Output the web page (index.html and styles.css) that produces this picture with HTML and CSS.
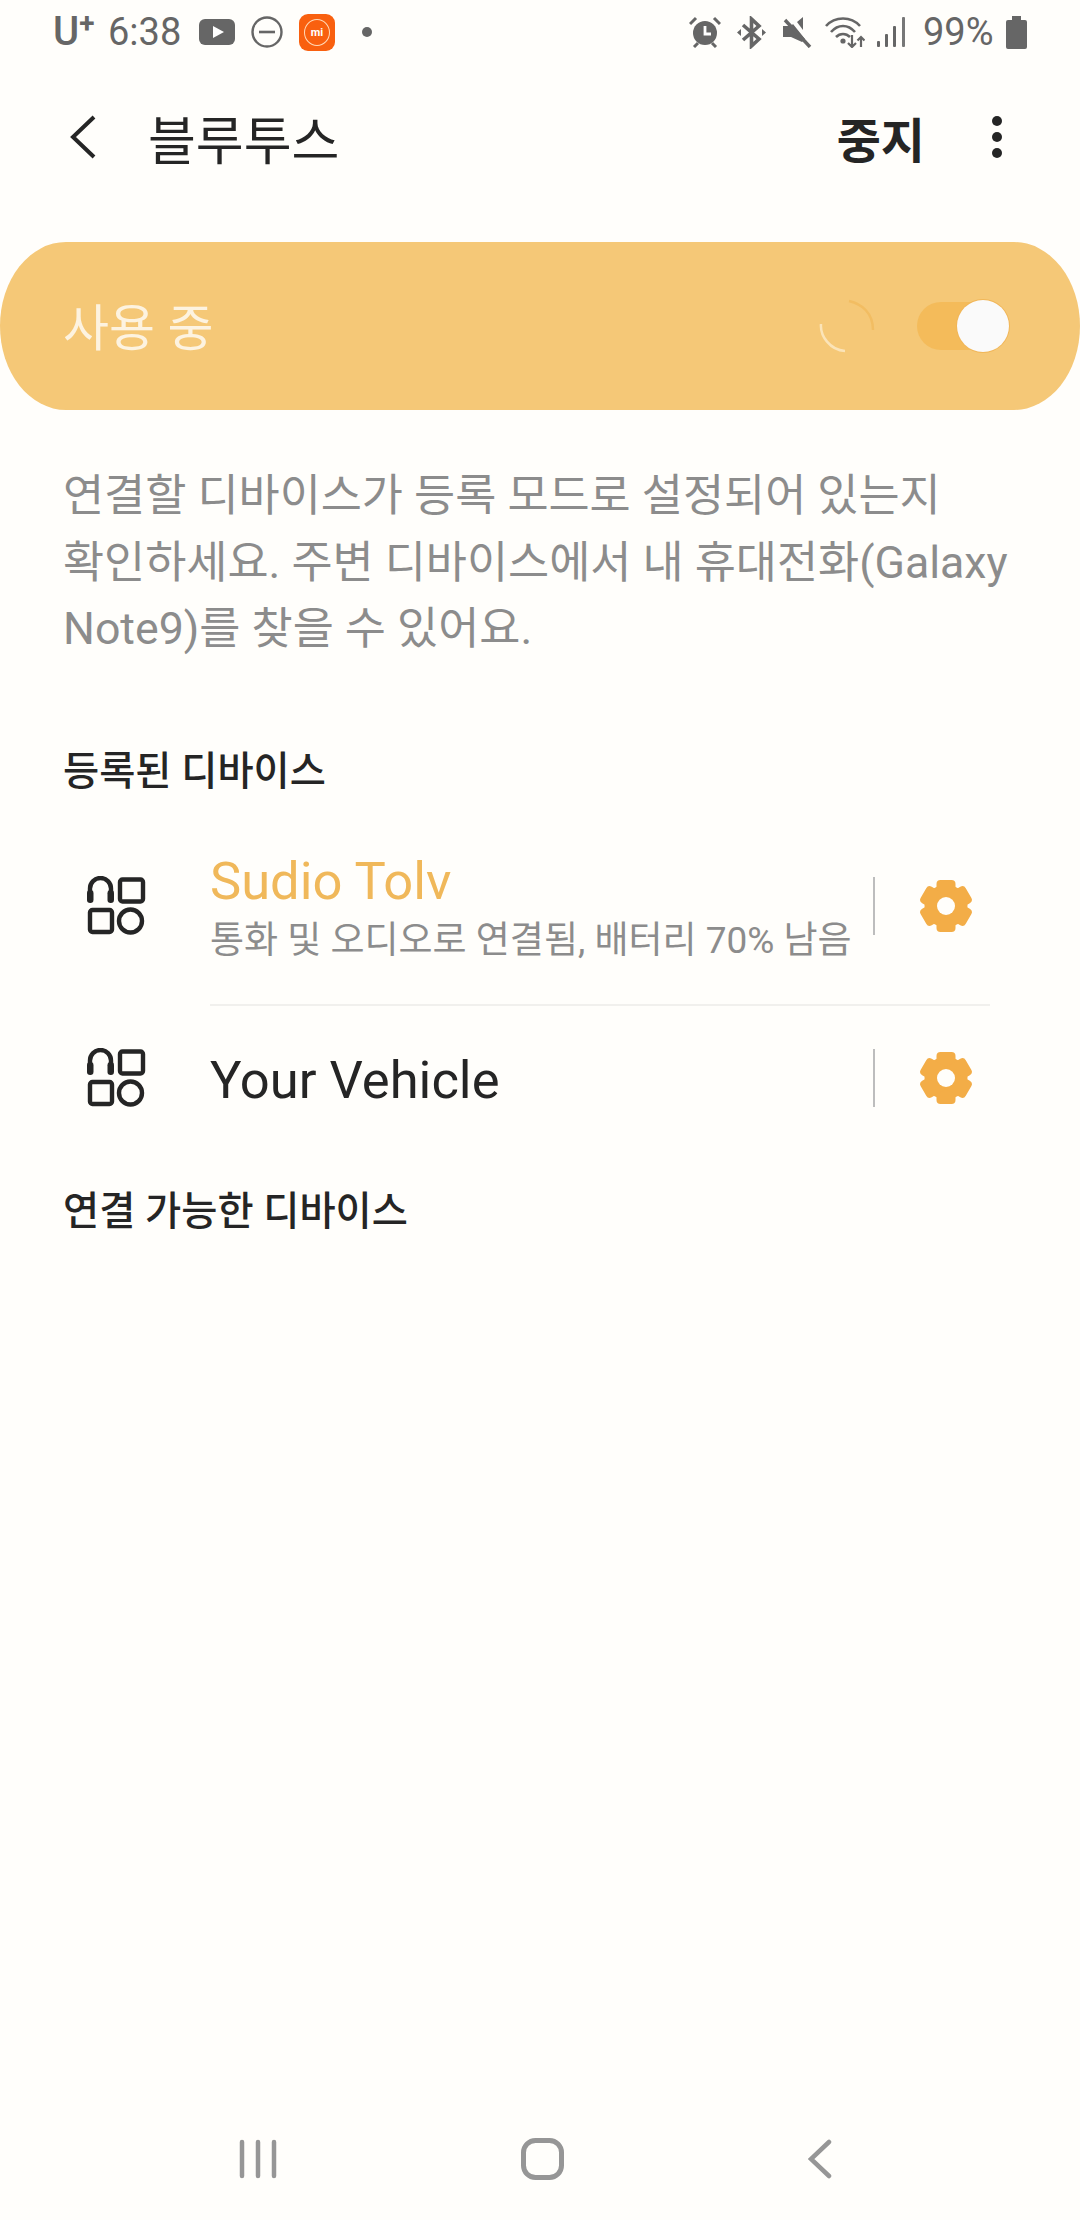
FILE: index.html
```html
<!DOCTYPE html>
<html lang="ko">
<head>
    <meta charset="UTF-8">
    <meta name="viewport" content="width=device-width, initial-scale=1.0">
    <title>블루투스</title>
    <link rel="stylesheet" href="styles.css">
</head>
<body>
<div class="page">
    <div class="status-bar">
        <div class="status-left">
            <span class="carrier">U<sup>+</sup></span>
            <span class="time">6:38</span>
            <svg class="ic-yt" viewBox="0 0 36 26"><rect width="36" height="26" rx="6" fill="#666"/><path d="M14 7 25 13 14 19z" fill="#fff"/></svg>
            <svg class="ic-dnd" viewBox="0 0 32 32"><circle cx="16" cy="16" r="14.5" fill="none" stroke="#666" stroke-width="2.4"/><path d="M8 16h16" stroke="#666" stroke-width="2.6"/></svg>
            <div class="mi-app"><span class="mi-ring"></span><span class="mi-text">mi</span></div>
            <span class="dot"></span>
        </div>
        <div class="status-right">
            <svg class="ic-alarm" viewBox="0 0 32 32"><circle cx="16" cy="17" r="12" fill="#666"/><path d="M16 10v8h6" fill="none" stroke="#fff" stroke-width="2.8"/><path d="M1 8 7 2M31 8 25 2M5 31l4-4M27 31l-4-4" stroke="#666" stroke-width="3"/></svg>
            <svg class="ic-bt" viewBox="0 0 29 33"><path d="M6 9 22 23 14.500 30V3L22 10 6 24" fill="none" stroke="#666" stroke-width="3.600"/><path d="M0 16.500 4 13V20zM29 16.500 25 13V20z" fill="#666"/></svg>
            <svg class="ic-mute" viewBox="0 0 29 32"><path d="M0 10h8L10 8 22 23 19 26 8 21H0zM14 6 20 1V14z" fill="#666"/><path d="M2 4 27 31" stroke="#666" stroke-width="3.400"/></svg>
            <svg class="ic-wifi" viewBox="0 0 40 32"><g fill="none" stroke="#666" stroke-width="2.600"><path d="M1 10C10 0 26 0 35 10"/><path d="M6 16C13 8 23 8 30 16"/><path d="M11 21C15 17 21 17 25 21"/></g><circle cx="18" cy="25" r="2.600" fill="#666"/><path d="M27 19V31M23 27l4 4 4-4M36 31V21M32.500 24.500 36 21l3.500 3.500" fill="none" stroke="#666" stroke-width="2.200"/></svg>
            <svg class="ic-signal" viewBox="0 0 28 30"><g fill="#666"><rect x="0" y="24" width="3" height="6" rx="1"/><rect x="8" y="17" width="3" height="13" rx="1"/><rect x="16" y="9" width="3" height="21" rx="1"/></g><rect x="25" y="0" width="3" height="30" rx="1" fill="#777"/></svg>
            <span class="battery-text">99%</span>
            <svg class="ic-battery" viewBox="0 0 21 33"><path d="M6 0h9v4h4a2 2 0 0 1 2 2v25a2 2 0 0 1-2 2H2a2 2 0 0 1-2-2V6a2 2 0 0 1 2-2h4z" fill="#666"/></svg>
        </div>
    </div>

    <div class="header">
        <svg class="ic-back" viewBox="0 0 26 44"><path d="M24 2 3 22 24 42" fill="none" stroke="#252525" stroke-width="4"/></svg>
        <span class="title">블루투스</span>
        <span class="stop">중지</span>
        <svg class="ic-more" viewBox="0 0 12 44"><circle cx="6" cy="6" r="5" fill="#252525"/><circle cx="6" cy="22" r="5" fill="#252525"/><circle cx="6" cy="38" r="5" fill="#252525"/></svg>
    </div>

    <div class="banner">
        <span class="banner-text">사용 중</span>
        <svg class="spinner" viewBox="0 0 56 56"><path d="M2 26C1 38 11 52 26 53" fill="none" stroke="#fbe4b8" stroke-width="2.500"/><path d="M30 3C43 6 54 15 54 32" fill="none" stroke="#f2bd62" stroke-width="2.500"/></svg>
        <div class="switch"><span class="knob"></span></div>
    </div>

    <p class="desc">연결할 디바이스가 등록 모드로 설정되어 있는지<br>확인하세요. 주변 디바이스에서 내 휴대전화(Galaxy<br>Note9)를 찾을 수 있어요.</p>

    <div class="section first">등록된 디바이스</div>

    <div class="device one">
        <svg class="ic-device" viewBox="0 0 60 60"><g fill="none" stroke="#252525" stroke-width="4.400"><path d="M4 18V12.500a10.500 10.500 0 0 1 21 0V18"/><rect x="34" y="3.500" width="23" height="22" rx="2.500"/><rect x="4" y="34" width="22" height="22" rx="2.500"/><circle cx="44.500" cy="45" r="11.500"/></g><rect x="1" y="14" width="6.500" height="13" rx="3.200" fill="#252525"/><rect x="21.500" y="14" width="6.500" height="13" rx="3.200" fill="#252525"/></svg>
        <div class="device-info">
            <div class="device-name active">Sudio Tolv</div>
            <div class="device-sub">통화 및 오디오로 연결됨, 배터리 70% 남음</div>
        </div>
        <span class="vline"></span>
        <svg class="ic-gear" viewBox="0 0 52 52"><g fill="#f3ad47"><circle cx="26" cy="26" r="21.500"/><rect x="16.500" y="0" width="19" height="52" rx="4"/><rect x="16.500" y="0" width="19" height="52" rx="4" transform="rotate(60 26 26)"/><rect x="16.500" y="0" width="19" height="52" rx="4" transform="rotate(120 26 26)"/></g><circle cx="26" cy="26" r="9" fill="#fffefb"/></svg>
    </div>
    <div class="row-line"></div>
    <div class="device two">
        <svg class="ic-device" viewBox="0 0 60 60"><g fill="none" stroke="#252525" stroke-width="4.400"><path d="M4 18V12.500a10.500 10.500 0 0 1 21 0V18"/><rect x="34" y="3.500" width="23" height="22" rx="2.500"/><rect x="4" y="34" width="22" height="22" rx="2.500"/><circle cx="44.500" cy="45" r="11.500"/></g><rect x="1" y="14" width="6.500" height="13" rx="3.200" fill="#252525"/><rect x="21.500" y="14" width="6.500" height="13" rx="3.200" fill="#252525"/></svg>
        <div class="device-info">
            <div class="device-name">Your Vehicle</div>
        </div>
        <span class="vline"></span>
        <svg class="ic-gear" viewBox="0 0 52 52"><g fill="#f3ad47"><circle cx="26" cy="26" r="21.500"/><rect x="16.500" y="0" width="19" height="52" rx="4"/><rect x="16.500" y="0" width="19" height="52" rx="4" transform="rotate(60 26 26)"/><rect x="16.500" y="0" width="19" height="52" rx="4" transform="rotate(120 26 26)"/></g><circle cx="26" cy="26" r="9" fill="#fffefb"/></svg>
    </div>

    <div class="section second">연결 가능한 디바이스</div>

    <div class="nav-bar">
        <svg class="ic-recents" viewBox="0 0 38 40"><path d="M3 3V37M19 3V37M35 3V37" stroke="#969696" stroke-width="4.500" stroke-linecap="round"/></svg>
        <svg class="ic-home" viewBox="0 0 43 42"><rect x="2.500" y="2.500" width="38" height="37" rx="12" fill="none" stroke="#969696" stroke-width="5"/></svg>
        <svg class="ic-navback" viewBox="0 0 24 40"><path d="M21 3 3 20 21 37" fill="none" stroke="#969696" stroke-width="4.500" stroke-linecap="round"/></svg>
    </div>
</div>
</body>
</html>
```
FILE: styles.css
```css
* {
    box-sizing: border-box;
}

body {
    margin: 0;
    background-color: #fffefb;
    font-family: Roboto, "Noto Sans CJK KR", sans-serif;
}

svg {
    display: block;
    flex-shrink: 0;
}

.page {
    display: flex;
    flex-direction: column;
    width: 1080px;
    height: 2220px;
    overflow: hidden;
}

/* status bar */
.status-bar {
    display: flex;
    justify-content: space-between;
    align-items: center;
    height: 64px;
    padding: 0 53px;
    color: #666;
    font-size: 38px;
}

.status-left,
.status-right {
    display: flex;
    align-items: center;
}

.carrier {
    width: 55px;
    font-weight: 500;
    font-size: 40px;
    line-height: 40px;
}

.carrier sup {
    font-size: 28px;
    font-weight: 700;
    line-height: 0;
    vertical-align: 12px;
}

.time {
    width: 91px;
}

.ic-yt {
    width: 36px;
    height: 26px;
    margin-right: 16px;
}

.ic-dnd {
    width: 32px;
    height: 32px;
    margin-right: 16px;
}

.mi-app {
    position: relative;
    display: flex;
    align-items: center;
    justify-content: center;
    width: 36px;
    height: 37px;
    margin-right: 27px;
    border-radius: 9px;
    background-color: #f9600f;
}

.mi-ring {
    position: absolute;
    top: 5px;
    left: 5px;
    width: 26px;
    height: 27px;
    border: 1px solid #ffd9b8;
    border-radius: 50%;
}

.mi-text {
    color: #fff;
    font-size: 11px;
    font-weight: 700;
    line-height: 11px;
}

.dot {
    width: 10px;
    height: 10px;
    border-radius: 50%;
    background-color: #666;
}

.ic-alarm {
    width: 32px;
    height: 32px;
    margin-right: 16px;
}

.ic-bt {
    width: 29px;
    height: 33px;
    margin-right: 17px;
}

.ic-mute {
    width: 29px;
    height: 32px;
    margin-right: 13px;
}

.ic-wifi {
    width: 40px;
    height: 32px;
    margin-right: 12px;
}

.ic-signal {
    width: 28px;
    height: 30px;
    margin-right: 18px;
}

.battery-text {
    width: 70px;
    margin-right: 13px;
}

.ic-battery {
    width: 21px;
    height: 33px;
}

/* header */
.header {
    display: flex;
    align-items: center;
    height: 146px;
    padding: 0 77px 0 70px;
    color: #252525;
}

.ic-back {
    width: 26px;
    height: 44px;
    margin-right: 52px;
}

.title {
    flex: 1;
    font-size: 52px;
}

.stop {
    margin-right: 66px;
    font-size: 48px;
    font-weight: 700;
}

.ic-more {
    width: 12px;
    height: 44px;
}

/* on/off banner */
.banner {
    display: flex;
    align-items: center;
    height: 168px;
    margin-top: 32px;
    padding: 0 71px 0 63px;
    border-radius: 66px / 84px;
    background-color: #f5c877;
}

.banner-text {
    flex: 1;
    padding-bottom: 4px;
    color: #fdf3e0;
    font-size: 50px;
}

.spinner {
    width: 56px;
    height: 56px;
    margin-right: 42px;
}

.switch {
    display: flex;
    align-items: center;
    justify-content: flex-end;
    width: 92px;
    height: 48px;
    border-radius: 24px;
    background-color: #f4bb5a;
}

.knob {
    width: 52px;
    height: 52px;
    border-radius: 50%;
    background-color: #fafafa;
    box-shadow: 0 0 0 1px #f1b658;
}

.desc {
    margin: 53px 63px 0;
    color: #8c8c8c;
    font-size: 44.7px;
    line-height: 66.5px;
    white-space: nowrap;
}

.section {
    padding-left: 63px;
    color: #252525;
    font-size: 39.3px;
    font-weight: 500;
    line-height: 50px;
}

.section.first {
    margin-top: 84px;
}

.section.second {
    margin-top: 37px;
}

/* device rows */
.device {
    display: flex;
    align-items: center;
    padding: 0 108px 0 86px;
}

.device.one {
    height: 196px;
    margin-top: 11px;
}

.device.two {
    height: 144px;
}

.ic-device {
    width: 60px;
    height: 60px;
}

.device-info {
    flex: 1;
    margin-left: 64px;
    padding-top: 4px;
}

.device-name {
    color: #252525;
    font-size: 52.5px;
    line-height: 56px;
}

.device-name.active {
    color: #f0b85a;
}

.device-sub {
    margin-top: 10px;
    color: #8c8c8c;
    font-size: 37px;
    line-height: 44px;
    white-space: nowrap;
}

.vline {
    width: 2px;
    height: 58px;
    margin-right: 45px;
    background-color: #bdbdbd;
}

.ic-gear {
    width: 52px;
    height: 52px;
}

.row-line {
    height: 2px;
    margin: 0 90px 0 210px;
    background-color: #f1f0ed;
}

/* navigation bar */
.nav-bar {
    display: flex;
    align-items: center;
    justify-content: space-between;
    height: 122px;
    margin-top: auto;
    padding: 0 248px 0 239px;
}

.ic-recents {
    width: 38px;
    height: 40px;
}

.ic-home {
    width: 43px;
    height: 42px;
}

.ic-navback {
    width: 24px;
    height: 40px;
}
```
